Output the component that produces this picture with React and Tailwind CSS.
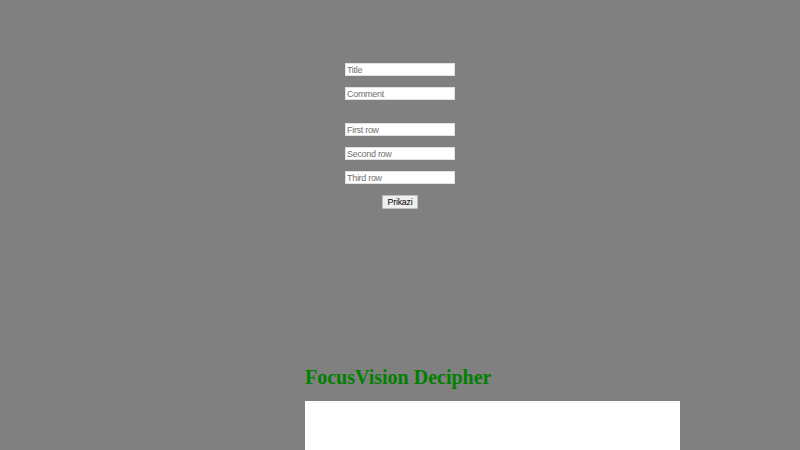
export default function App() {
  const fields = ['Title', 'Comment'];
  const rows = ['First row', 'Second row', 'Third row'];

  return (
    <div className="w-[800px] h-[450px] overflow-hidden bg-[#808080] font-['Liberation_Sans',Arial,sans-serif]">
      <div className="flex flex-col items-center pt-[63px]">
        <div className="flex flex-col gap-[11px]">
          {fields.map((f) => (
            <input
              key={f}
              placeholder={f}
              className="w-[110px] h-[13px] bg-white border border-[#e0e0e0] px-[1px] text-[9px] tracking-[-0.3px] leading-none text-black placeholder:text-[#6f6f6f] outline-none"
            />
          ))}
        </div>
        <div className="flex flex-col gap-[11px] mt-[23px]">
          {rows.map((r) => (
            <input
              key={r}
              placeholder={r}
              className="w-[110px] h-[13px] bg-white border border-[#e0e0e0] px-[1px] text-[9px] tracking-[-0.3px] leading-none text-black placeholder:text-[#6f6f6f] outline-none"
            />
          ))}
        </div>
        <button className="mt-[11px] h-[14px] px-[4.5px] bg-[#efefef] border border-[#bdbdbd] rounded-[1px] text-[8.8px] tracking-[-0.2px] font-normal leading-none text-black">
          Prikazi
        </button>
      </div>
      <div className="ml-[305px] mt-[158px]">
        <h2 className="font-['Liberation_Serif','Times_New_Roman',serif] font-bold text-[20px] leading-none text-[#008000]">
          FocusVision Decipher
        </h2>
        <div className="mt-[14px] w-[375px] h-[60px] bg-white" />
      </div>
    </div>
  );
}
